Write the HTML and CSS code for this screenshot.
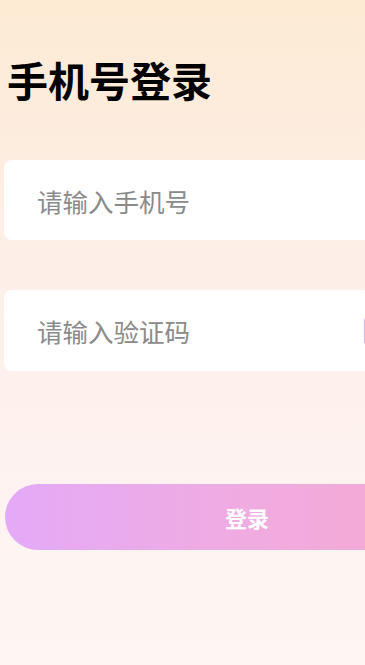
FILE: index.html
```html
<!DOCTYPE html>
<html>
<head>
    <title>手机号登录</title>
    <link rel="stylesheet" href="styles.css">
</head>
<body>
    <div class="page">
        <h2 class="title">手机号登录</h2>
        <form class="login-form">
            <div class="form-group">
                <input type="text" class="field" placeholder="请输入手机号">
            </div>
            <div class="form-group">
                <input type="text" class="field" placeholder="请输入验证码">
                <button type="button" class="code-btn">获取验证码</button>
            </div>
            <button type="submit" class="submit-btn">登录</button>
        </form>
    </div>
</body>
</html>
```

FILE: styles.css
```css
html, body { margin: 0; padding: 0; overflow: hidden; }
body {
    font-family: "Noto Sans CJK SC", "Noto Sans", sans-serif;
    height: 665px;
    background: linear-gradient(180deg, #fdebd4 0%, #fdeee8 40%, #fef3f1 75%, #fef6f3 100%);
}
.page { width: 486px; padding: 0 4px; }
.title { font-size: 41px; font-weight: 700; color: #000; margin: 0; padding: 48px 0 0 3px; line-height: 62px; }
.login-form { margin-top: 50px; }
.form-group {
    display: flex; align-items: center; height: 80px; margin-bottom: 50px;
    background: #fff; border-radius: 8px; padding: 0 14px 0 33px;
}
.form-group:nth-child(2) { height: 81px; }
.field {
    flex: 1; border: none; outline: none; background: transparent;
    font-family: inherit; font-size: 25.5px; color: #333; padding: 0; min-width: 0;
}
.field::placeholder { color: #8a8a8a; }
.code-btn {
    height: 32px; width: 112px; border: none; border-radius: 6px; color: #fff;
    background: #ddaaf6; font-family: inherit; font-size: 15px; margin-left: 10px;
    white-space: nowrap;
}
.submit-btn {
    display: block; width: 484px; height: 66px; margin: 113px 0 0 1px; border: none; border-radius: 33px;
    background: linear-gradient(90deg, #e4aaf8 0%, #f0abe0 50%, #f6a9cf 100%);
    color: #fff; font-family: inherit; font-size: 22px; font-weight: 700; cursor: pointer;
}
```
